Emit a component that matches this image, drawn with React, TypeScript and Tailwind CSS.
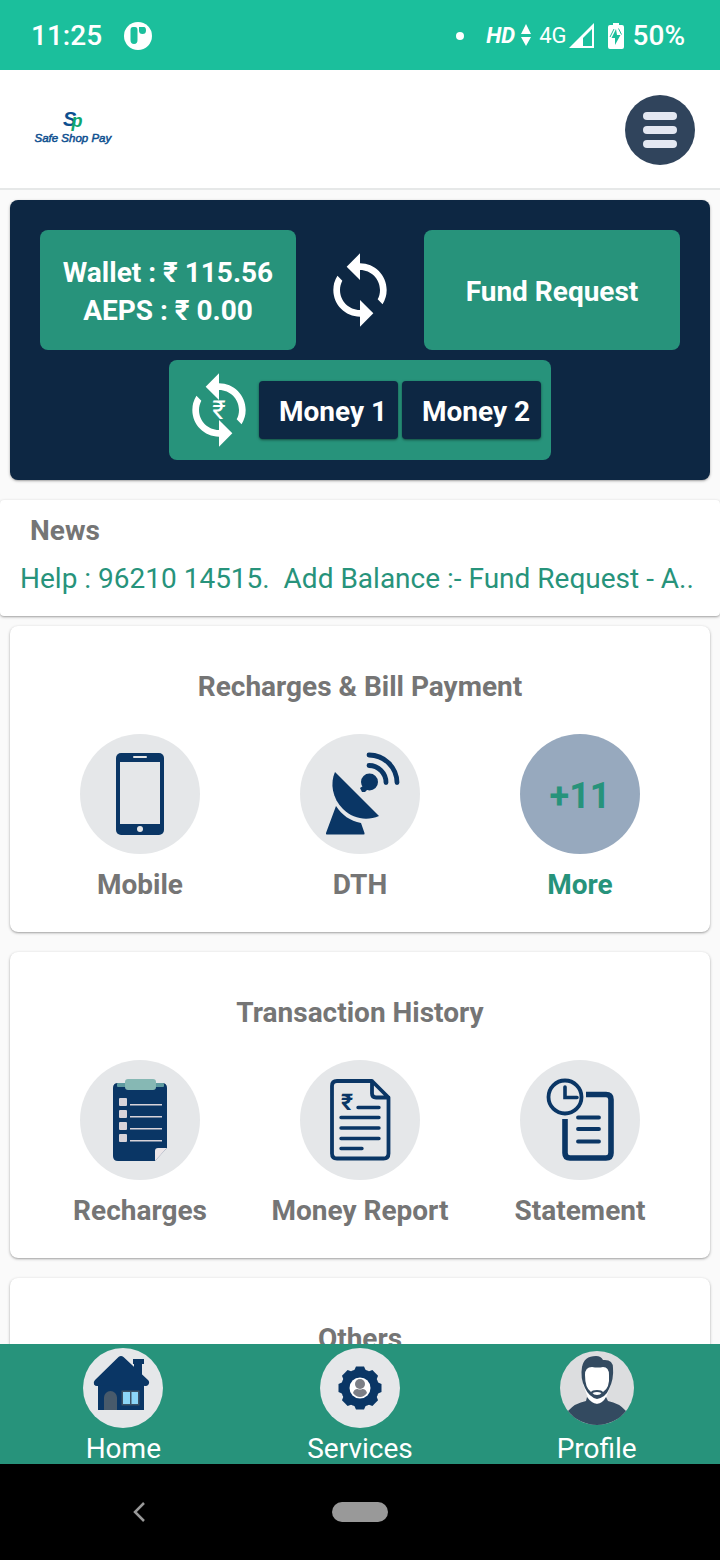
import type { ReactNode } from "react";
import { MdSync } from "react-icons/md";

const NAVY = "#0a3665";

function StatusBar() {
  return (
    <div className="flex h-[70px] shrink-0 items-center justify-between bg-[#1bbf9c] pt-0.5 pr-[35px] pl-[31px] text-white">
      <div className="flex items-center gap-[22px]">
        <span className="text-[28px] leading-8 font-medium">11:25</span>
        <svg viewBox="0 0 28 28" className="size-7" aria-hidden="true">
          <circle cx="14" cy="14" r="14" fill="#fff" />
          <path d="M9 5h2q2.500 0 2.500 3v10q0 4-3.500 4t-3.500-4V8q0-3 2.500-3z" fill="#1bbf9c" />
          <path d="M15 5h5q2 0 2 3.500t-3.500 3.500-3.500-3.500z" fill="#1bbf9c" />
        </svg>
      </div>
      <div className="flex items-center">
        <span className="mr-[22px] size-2 rounded-full bg-white" />
        <span className="mr-1.5 text-[22px] leading-8 font-bold italic">HD</span>
        <svg viewBox="0 0 10 24" className="mr-2 h-6 w-2.5" fill="#fff" aria-hidden="true">
          <path d="M5 0l5 10H0zM5 22l5-9H0z" />
        </svg>
        <span className="mr-0.5 text-[22px] leading-8">4G</span>
        <svg viewBox="0 0 26 26" className="mr-3 size-[26px]" aria-hidden="true">
          <path d="M25 0v25H0z" fill="#fff" />
          <path d="M23 6v17h-9v-8z" fill="#1bbf9c" />
        </svg>
        <svg viewBox="0 0 18 26" className="mr-2 h-[26px] w-[18px]" aria-hidden="true">
          <path d="M6 0h6v2h3q2 0 2 2v20q0 2-2 2H3q-2 0-2-2V4q0-2 2-2h3z" fill="#fff" />
          <path d="M9 6L4.500 15H8v7l5.500-10H10z" fill="#1bbf9c" />
          <path d="M7 6l-4 8M11.500 5.500l3 6" stroke="#1bbf9c" />
        </svg>
        <span className="text-[28px] leading-8 font-medium">50%</span>
      </div>
    </div>
  );
}

function Header() {
  return (
    <header className="flex h-[120px] shrink-0 items-center justify-between border-b-2 border-[#e6e8e8] bg-white pt-0.5 pr-[25px] pl-[34px]">
      <svg viewBox="0 0 160 80" className="h-10 w-20" role="img" aria-label="Safe Shop Pay">
        <g fontFamily="'Liberation Sans', sans-serif" fontStyle="italic">
          <text x="58" y="32" fontSize="40" fontWeight="bold" fill="#0d4f8f">S</text>
          <text x="75" y="33" fontSize="36" fontWeight="bold" fill="#0fa56f">p</text>
          <text x="1" y="63" fontSize="23" fill="#0d4f8f" stroke="#0d4f8f">Safe Shop Pay</text>
        </g>
      </svg>
      <button
        type="button"
        aria-label="Menu"
        className="flex size-[70px] flex-col items-center justify-center gap-1.5 rounded-full bg-[#30445c]"
      >
        <span className="h-2 w-[34px] rounded-full bg-[#e4e8f2]" />
        <span className="h-2 w-[34px] rounded-full bg-[#e4e8f2]" />
        <span className="h-2 w-[34px] rounded-full bg-[#e4e8f2]" />
      </button>
    </header>
  );
}

function MoneyButton({ label }: { label: string }) {
  return (
    <button
      type="button"
      className="h-[58px] rounded-sm bg-[#0d2743] pt-1 pr-[11px] pl-5 font-bold shadow-sm shadow-black/40"
    >
      {label}
    </button>
  );
}

function WalletCard() {
  return (
    <section className="mx-2.5 rounded-lg bg-[#0d2743] px-[30px] pt-[30px] pb-5 text-[28px] font-bold text-white shadow-sm shadow-black/30">
      <div className="grid grid-cols-[2fr_1fr_2fr]">
        <div className="flex h-[120px] flex-col items-center justify-center rounded-lg bg-[#27937b] pt-1 leading-[38px] whitespace-nowrap">
          <p>Wallet : ₹ 115.56</p>
          <p>AEPS : ₹ 0.00</p>
        </div>
        <button type="button" aria-label="Refresh balance" className="flex items-center justify-center">
          <MdSync className="size-20" />
        </button>
        <button type="button" className="h-[120px] rounded-lg bg-[#27937b] pt-1">
          Fund Request
        </button>
      </div>
      <div className="mx-auto mt-2.5 flex h-[100px] w-fit items-center gap-1 rounded-lg bg-[#27937b] px-2.5">
        <button type="button" aria-label="Transfer money" className="relative -mr-1">
          <MdSync className="size-20" />
          <span className="absolute inset-0 flex items-center justify-center text-[26px] font-normal">₹</span>
        </button>
        <MoneyButton label="Money 1" />
        <MoneyButton label="Money 2" />
      </div>
    </section>
  );
}

function News() {
  return (
    <section className="mt-5 h-[116px] rounded-sm bg-white px-5 pt-3 text-[28px] shadow-sm shadow-black/30">
      <h2 className="pl-2.5 leading-[38px] font-bold text-[#757575]">News</h2>
      <p className="mt-2.5 overflow-hidden leading-[38px] whitespace-pre text-[#27937b]">
        {"Help : 96210 14515.  Add Balance :- Fund Request - A.."}
      </p>
    </section>
  );
}

function MobileIcon() {
  return (
    <svg viewBox="0 0 120 120" className="size-[120px]" aria-hidden="true">
      <rect x="36" y="19" width="48" height="82" rx="5" fill={NAVY} />
      <rect x="40" y="28" width="40" height="62" fill="#e5e7e9" />
      <rect x="53" y="22" width="14" height="2" rx="1" fill="#e5e7e9" />
      <circle cx="60" cy="95" r="3" fill="#e5e7e9" />
    </svg>
  );
}

function DishIcon() {
  return (
    <svg viewBox="0 0 120 120" className="size-[120px]" fill={NAVY} aria-hidden="true">
      <path d="M35 38L79 82C67 87 53 85 43 75 32 64 30 49 35 38z" />
      <path d="M36 72C42 81 50 87 61 89L64.500 99q.5 1.500-1 1.500H27q-1.500 0-1-1.500z" />
      <circle cx="69.500" cy="48" r="8.500" />
      <path d="M60 54l6-4 3 4-4 4-3 0z" />
      <path
        d="M69 31.500A17 17 0 0 1 86 48.500M69 21A28 28 0 0 1 97 48.500"
        fill="none"
        stroke={NAVY}
        strokeWidth="4.800"
        strokeLinecap="round"
      />
    </svg>
  );
}

function ClipboardIcon() {
  return (
    <svg viewBox="0 0 120 120" className="size-[120px]" aria-hidden="true">
      <path d="M38 23H82q5 0 5 5V88L75 101H38q-5 0-5-5V28q0-5 5-5z" fill={NAVY} />
      <path d="M75 101V91q0-3 3-3H87z" fill="#ece6e8" />
      <path d="M75.500 101L87 88.500V101z" fill="#e5e7e9" />
      <rect x="37" y="23" width="47" height="4" rx="1" fill="#5f9ba0" />
      <rect x="45" y="19" width="31" height="11" rx="3" fill="#86b8b4" />
      {[38, 50, 62, 74].map((y) => (
        <g key={y} fill="#d8d4da">
          <rect x="39" y={y} width="8" height="8" rx="1" />
          <rect x="50" y={y + 6} width="32" height="1.500" />
        </g>
      ))}
    </svg>
  );
}

function ReportIcon() {
  return (
    <svg
      viewBox="0 0 120 120"
      className="size-[120px]"
      fill="none"
      stroke={NAVY}
      strokeWidth="3.800"
      strokeLinecap="round"
      strokeLinejoin="round"
      aria-hidden="true"
    >
      <path d="M72 21H37q-5 0-5 5V93.500q0 5 5 5H83.500q5 0 5-5V37.500zV33.500q0 4 4 4H88.500" />
      <path d="M58 47.500H79M41 57.500H79M41 68H79M41 78.500H79M41 88.500H62" strokeWidth="3.400" />
      <text x="41" y="50" fontSize="23" fontFamily="Roboto, sans-serif" fill={NAVY} stroke="none">
        ₹
      </text>
    </svg>
  );
}

function StatementIcon() {
  return (
    <svg viewBox="0 0 120 120" className="size-[120px]" fill="none" stroke={NAVY} aria-hidden="true">
      <circle cx="45" cy="37" r="16.500" strokeWidth="3.800" />
      <path d="M45 27V37.500H57" strokeWidth="3.600" strokeLinecap="round" />
      <path d="M66 34.500H86q5 0 5 5V93q0 5-5 5H50q-5 0-5-5V59" strokeWidth="5.600" />
      <path d="M58 57.500H79M58 69H79M58 81.500H79" strokeWidth="3.800" strokeLinecap="round" />
    </svg>
  );
}

function Card({ title, children }: { title: string; children?: ReactNode }) {
  return (
    <section className="mx-2.5 min-h-[306px] rounded-lg bg-white px-5 pt-[42px] pb-7 text-[28px] font-bold text-[#757575] shadow-sm shadow-black/30">
      <h2 className="text-center leading-[38px]">{title}</h2>
      <div className="mt-7 grid grid-cols-3">{children}</div>
    </section>
  );
}

function Tile({ label, icon }: { label: string; icon: ReactNode }) {
  return (
    <button type="button" className="flex flex-col items-center gap-3 whitespace-nowrap">
      <span className="rounded-full bg-[#e5e7e9]">{icon}</span>
      <span className="leading-[38px]">{label}</span>
    </button>
  );
}

function HomeIcon() {
  return (
    <svg viewBox="0 0 80 80" className="size-20" aria-hidden="true">
      <circle cx="40" cy="40" r="40" fill="#e5e7e9" />
      <path d="M15 34H61V62H15z" fill={NAVY} />
      <path d="M50 11H61V16H59V32L51 25V16H50z" fill={NAVY} />
      <path
        d="M35.500 9q2.500-2 5 0L65 32q2 2 .5 4.500-2 2.500-5 1H16q-3 1.500-5-1Q10 34 12 32z"
        fill={NAVY}
      />
      <path d="M21 62V49.500a6.500 6.500 0 0 1 13 0V62z" fill="#485a6b" />
      <rect x="38.500" y="42.500" width="18" height="15" fill="#3b5064" />
      <rect x="40" y="44" width="7" height="12" fill="#8cd5f6" />
      <rect x="48.500" y="44" width="6.500" height="12" fill="#8cd5f6" />
    </svg>
  );
}

function ServicesIcon() {
  return (
    <svg viewBox="0 0 80 80" className="size-20" aria-hidden="true">
      <circle cx="40" cy="40" r="40" fill="#e5e7e9" />
      <circle cx="40" cy="40" r="19" fill={NAVY} />
      {[0, 45, 90, 135, 180, 225, 270, 315].map((angle) => (
        <path key={angle} d="M34 23L36 18.500H44L46 23z" fill={NAVY} transform={`rotate(${angle} 40 40)`} />
      ))}
      <circle cx="40" cy="40" r="10.500" fill="#fff" />
      <circle cx="40" cy="36" r="5" fill="#7c7f86" />
      <path d="M33 45q1-4 4.500-4 2.500 1 5 0 3.500 0 4.500 4-3 4-7 4t-7-4z" fill="#7c7f86" />
    </svg>
  );
}

function ProfileIcon() {
  return (
    <svg viewBox="-3 -3 80 80" className="size-20" aria-hidden="true">
      <circle cx="37" cy="37" r="37" fill="#dcdddf" />
      <path d="M23 16V33L28 47Q37 58 46 47L51 33V16z" fill="#fff" />
      <path
        d="M25 37Q20 27 22 16 24 5 36 5q5 0 7 4 10-1 10 8 1 11-4 21-3 8-12 10-8-2-12-11zM25 24Q25 37 31 41q1-2 6-2t6 2q7-4 6-17 0-8-6-8Q38 17 32 16q-7 0-7 8z"
        fill="#334a60"
        fillRule="evenodd"
      />
      <path d="M32.500 42q4.500-2 9 0-1 2-4.500 2T32.500 42z" fill="#fff" />
      <path d="M27 46Q31 52 37 53 43 52 46 46L48 50Q59 52 66 60A37 37 0 0 1 8 60Q15 52 26 50z" fill="#334a60" />
    </svg>
  );
}

function BottomNav() {
  const items = [
    { label: "Home", icon: <HomeIcon /> },
    { label: "Services", icon: <ServicesIcon /> },
    { label: "Profile", icon: <ProfileIcon /> },
  ];
  return (
    <nav className="grid h-[120px] shrink-0 grid-cols-3 bg-[#27937b] px-[5px] pt-1 text-[28px] text-white">
      {items.map((item) => (
        <a key={item.label} href="#" className="flex flex-col items-center gap-1.5">
          {item.icon}
          <span className="leading-[30px]">{item.label}</span>
        </a>
      ))}
    </nav>
  );
}

function SystemBar() {
  return (
    <div className="grid h-24 shrink-0 grid-cols-[278px_1fr_278px] items-center bg-black">
      <button type="button" aria-label="Back" className="justify-self-center">
        <svg viewBox="0 0 12 20" className="h-5 w-3" fill="none" stroke="#999" strokeWidth="2.500" aria-hidden="true">
          <path d="M11 1L2 10l9 9" />
        </svg>
      </button>
      <button type="button" aria-label="Home screen" className="h-5 w-14 justify-self-center rounded-full bg-[#999]" />
    </div>
  );
}

export default function App() {
  return (
    <div className="flex h-screen flex-col overflow-hidden bg-[#fafafa] font-[Roboto,sans-serif]">
      <StatusBar />
      <Header />
      <main className="min-h-0 flex-1 overflow-hidden pt-2.5">
        <WalletCard />
        <News />
        <div className="mt-2.5 flex flex-col gap-5">
          <Card title="Recharges & Bill Payment">
            <Tile label="Mobile" icon={<MobileIcon />} />
            <Tile label="DTH" icon={<DishIcon />} />
            <button type="button" className="flex flex-col items-center gap-3 text-[#27937b]">
              <span className="flex size-[120px] items-center justify-center rounded-full bg-[#97a9be] pt-1 text-[36px]">
                +11
              </span>
              <span className="leading-[38px]">More</span>
            </button>
          </Card>
          <Card title="Transaction History">
            <Tile label="Recharges" icon={<ClipboardIcon />} />
            <Tile label="Money Report" icon={<ReportIcon />} />
            <Tile label="Statement" icon={<StatementIcon />} />
          </Card>
          <Card title="Others" />
        </div>
      </main>
      <BottomNav />
      <SystemBar />
    </div>
  );
}
